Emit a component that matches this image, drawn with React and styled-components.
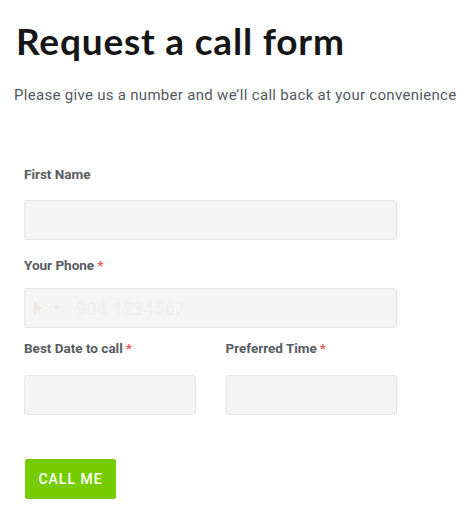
import React from "react";
import { styled, createGlobalStyle } from "styled-components";

const GlobalStyle = createGlobalStyle`
  body {
    margin: 0;
    background: #ffffff;
    font-family: Roboto, "Liberation Sans", sans-serif;
  }
`;

const Page = styled.div`
  width: 472px;
  height: 518px;
  padding: 0 0 0 16px;
  box-sizing: border-box;
  overflow: hidden;
`;

const Title = styled.h1`
  margin: 0;
  padding-top: 19px;
  font-family: Lato, "Open Sans", sans-serif;
  font-weight: 700;
  font-size: 37px;
  line-height: 44px;
  letter-spacing: 0.8px;
  color: #161616;
`;

const Subtitle = styled.p`
  margin: 22px 0 0 -2px;
  font-size: 15px;
  line-height: 20px;
  letter-spacing: 0.3px;
  color: #54595f;
`;

const Form = styled.form`
  width: 373px;
  margin: 59px 0 0 8px;
  display: flex;
  flex-direction: column;
`;

const Field = styled.div`
  display: flex;
  flex-direction: column;
  margin-top: ${(p) => p.$top || 0}px;
  min-width: 0;
`;

const Label = styled.label`
  font-size: 13.5px;
  line-height: 20px;
  font-weight: 700;
  color: #595c60;
  margin-bottom: ${(p) => p.$gap}px;
`;

const Req = styled.span`
  color: #f0554c;
  margin-left: 3px;
`;

const Input = styled.div`
  height: 40px;
  box-sizing: border-box;
  background: #f4f4f4;
  border: 1px solid #e6e6e6;
  border-radius: 3px;
  display: flex;
  align-items: center;
  padding-left: 9px;
`;

const Flag = styled.div`
  display: flex;
  align-items: center;
  gap: 6px;
  width: 42px;
`;

const Placeholder = styled.span`
  font-size: 18px;
  color: #eeeeee;
  letter-spacing: 0.3px;
`;

const Row = styled.div`
  display: grid;
  grid-template-columns: 1fr 1fr;
  column-gap: 30px;
  margin-top: 10px;
`;

const Button = styled.button`
  margin-top: 44px;
  align-self: flex-start;
  margin-left: 1px;
  width: 91px;
  height: 40px;
  border: none;
  border-radius: 2px;
  background: #77cc00;
  color: #ffffff;
  font-family: Roboto, "Liberation Sans", sans-serif;
  font-size: 14px;
  font-weight: 500;
  letter-spacing: 1px;
  padding: 0;
`;

function App() {
  return (
    <Page>
      <GlobalStyle />
      <Title>Request a call form</Title>
      <Subtitle>
        Please give us a number and we’ll call back at your convenience
      </Subtitle>
      <Form>
        <Field>
          <Label $gap={16}>First Name</Label>
          <Input />
        </Field>
        <Field $top={15}>
          <Label $gap={13}>
            Your Phone<Req>*</Req>
          </Label>
          <Input>
            <Flag>
              <svg width="14" height="12" viewBox="0 0 14 12">
                <rect x="0" y="0" width="14" height="12" fill="#f3f3f3" />
                <path d="M0 0 L8 6 L0 12 Z" fill="#efe4e4" />
                <path d="M2 7 L6 9 L2 11 Z" fill="#e9f0e6" />
              </svg>
              <svg width="6" height="4" viewBox="0 0 6 4">
                <path d="M0 0 L6 0 L3 4 Z" fill="#e8e8e8" />
              </svg>
            </Flag>
            <Placeholder>904-1234567</Placeholder>
          </Input>
        </Field>
        <Row>
          <Field>
            <Label $gap={17}>
              Best Date to call<Req>*</Req>
            </Label>
            <Input />
          </Field>
          <Field>
            <Label $gap={17}>
              Preferred Time<Req>*</Req>
            </Label>
            <Input />
          </Field>
        </Row>
        <Button type="button">CALL ME</Button>
      </Form>
    </Page>
  );
}

export default App;
